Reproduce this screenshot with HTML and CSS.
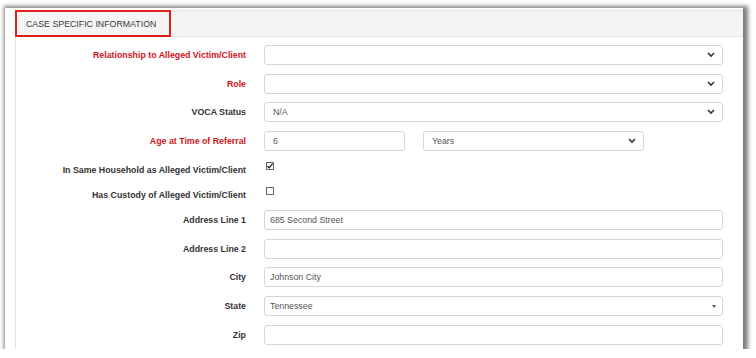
FILE: index.html
```html
<!DOCTYPE html>
<html>
    <head>
        <meta charset="utf-8" />
        <title>Case Specific Information</title>
        <link rel="stylesheet" href="styles.css">
    </head>
    <body>
        <div class="shot">
            <div class="panel">
                <div class="panel-head">
                    <span class="head-title">CASE SPECIFIC INFORMATION</span>
                </div>
                <div class="panel-body">
                    <div class="row">
                        <label class="lbl req">Relationship to Alleged Victim/Client</label>
                        <div class="fld">
                            <span class="sel">
                                <select class="box"><option></option></select>
                                <svg class="chev" width="8" height="6" viewBox="0 0 8 6"><polyline points="1,1 4,4 7,1" /></svg>
                            </span>
                        </div>
                    </div>
                    <div class="row">
                        <label class="lbl req">Role</label>
                        <div class="fld">
                            <span class="sel">
                                <select class="box"><option></option></select>
                                <svg class="chev" width="8" height="6" viewBox="0 0 8 6"><polyline points="1,1 4,4 7,1" /></svg>
                            </span>
                        </div>
                    </div>
                    <div class="row">
                        <label class="lbl">VOCA Status</label>
                        <div class="fld">
                            <span class="sel">
                                <select class="box pad"><option>N/A</option></select>
                                <svg class="chev" width="8" height="6" viewBox="0 0 8 6"><polyline points="1,1 4,4 7,1" /></svg>
                            </span>
                        </div>
                    </div>
                    <div class="row before-check">
                        <label class="lbl req">Age at Time of Referral</label>
                        <div class="fld">
                            <input class="box pad age" type="text" value="6" />
                            <span class="sel years">
                                <select class="box pad"><option>Years</option></select>
                                <svg class="chev" width="8" height="6" viewBox="0 0 8 6"><polyline points="1,1 4,4 7,1" /></svg>
                            </span>
                        </div>
                    </div>
                    <div class="row check">
                        <label class="lbl">In Same Household as Alleged Victim/Client</label>
                        <div class="fld">
                            <span class="chk">
                                <svg width="8" height="8" viewBox="0 0 8 8"><polyline points="1.5,4 3.2,5.8 6.6,1.6" /></svg>
                            </span>
                        </div>
                    </div>
                    <div class="row check last-check">
                        <label class="lbl">Has Custody of Alleged Victim/Client</label>
                        <div class="fld">
                            <span class="chk"></span>
                        </div>
                    </div>
                    <div class="row">
                        <label class="lbl">Address Line 1</label>
                        <div class="fld"><input class="box" type="text" value="685 Second Street" /></div>
                    </div>
                    <div class="row">
                        <label class="lbl">Address Line 2</label>
                        <div class="fld"><input class="box" type="text" value="" /></div>
                    </div>
                    <div class="row">
                        <label class="lbl">City</label>
                        <div class="fld"><input class="box" type="text" value="Johnson City" /></div>
                    </div>
                    <div class="row">
                        <label class="lbl">State</label>
                        <div class="fld">
                            <span class="sel">
                                <select class="box"><option>Tennessee</option></select>
                                <span class="tri"></span>
                            </span>
                        </div>
                    </div>
                    <div class="row">
                        <label class="lbl">Zip</label>
                        <div class="fld"><input class="box" type="text" value="" /></div>
                    </div>
                </div>
            </div>
        </div>
    </body>
</html>
```

FILE: styles.css
```css
html, body {
    margin: 0;
    padding: 0;
    background: #fff;
    font-family: "Liberation Sans", Arial, sans-serif;
}
.shot {
    margin: 8px 0 0 5px;
    width: 738px;
    height: 341px;
    background: #fff;
    box-shadow: 2px 1px 4px 3px rgba(0, 0, 0, 0.5);
    overflow: hidden;
}
.panel {
    margin: 2px 0 0 10px;
    border-left: 1px solid #e2e2e2;
    height: 100%;
}
.panel-head {
    display: flex;
    height: 27px;
    box-sizing: border-box;
    background: #f4f4f4;
    border-top: 1px solid #e6e6e6;
    border-bottom: 1px solid #e2e2e2;
}
.head-title {
    display: flex;
    align-items: center;
    margin: -1px 0 -1px -1px;
    padding: 0 13px 0 9px;
    border: 2px solid #e0201b;
    font-size: 8.8px;
    color: #3a3a3a;
}
.panel-body {
    padding-top: 8px;
}
.row {
    display: flex;
    align-items: center;
    height: 20px;
    margin-bottom: 8.7px;
}
.row.before-check {
    margin-bottom: 6.5px;
}
.row.check {
    height: 25px;
    margin-bottom: 0;
}
.row.last-check {
    margin-bottom: 2.5px;
}
.lbl {
    flex: none;
    width: 230px;
    text-align: right;
    font-size: 8.8px;
    font-weight: bold;
    color: #333;
}
.lbl.req {
    color: #d0141c;
}
.fld {
    flex: none;
    display: flex;
    gap: 18px;
    width: 459px;
    margin-left: 18px;
}
.box {
    -webkit-appearance: none;
    appearance: none;
    flex: 1;
    width: 100%;
    height: 20px;
    margin: 0;
    box-sizing: border-box;
    padding: 0 0 0 5px;
    border: 1px solid #d6d6d6;
    border-radius: 3px;
    background: #fff;
    font-family: inherit;
    font-size: 8.8px;
    color: #555;
    outline: none;
}
.box.pad {
    padding-left: 8px;
}
.box.age {
    flex: none;
    width: 141px;
}
.sel {
    position: relative;
    display: flex;
    flex: 1;
}
.sel.years {
    flex: none;
    width: 221px;
}
.chev {
    position: absolute;
    right: 8px;
    top: 7px;
}
.chev polyline {
    fill: none;
    stroke: #333;
    stroke-width: 1.6;
}
.tri {
    position: absolute;
    right: 7px;
    top: 9px;
    border-left: 2.5px solid transparent;
    border-right: 2.5px solid transparent;
    border-top: 3px solid #555;
}
.chk {
    display: block;
    width: 8px;
    height: 8px;
    box-sizing: border-box;
    margin: 0 0 8px 2px;
    border: 1px solid #666;
    background: #fff;
}
.chk svg {
    display: block;
    margin: -1px 0 0 -1px;
}
.chk polyline {
    fill: none;
    stroke: #222;
    stroke-width: 1.3;
}
```
